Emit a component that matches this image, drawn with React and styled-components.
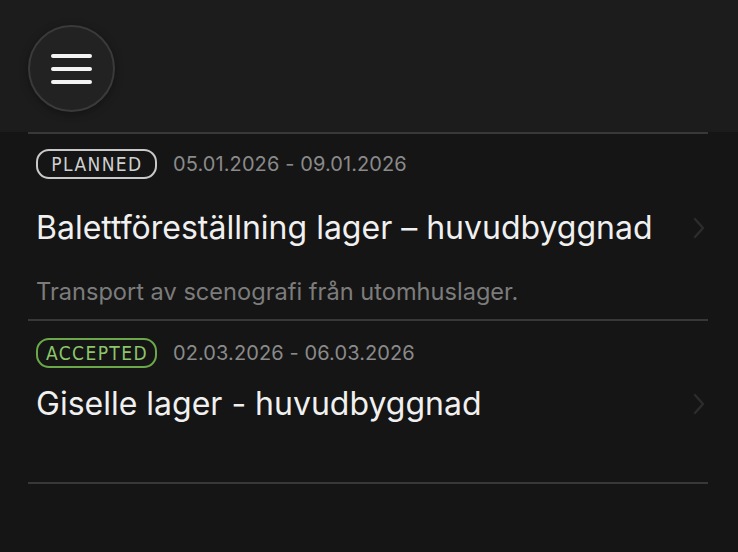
import React from "react";
import styled, { createGlobalStyle, css } from "styled-components";

const GlobalStyle = createGlobalStyle`
  html, body {
    margin: 0;
    padding: 0;
    background: #151515;
  }
  body {
    font-family: Inter, "Noto Sans", sans-serif;
    -webkit-font-smoothing: antialiased;
  }
`;

const Page = styled.div`
  width: 738px;
  height: 552px;
  background: #151515;
  overflow: hidden;
`;

const Header = styled.header`
  height: 132px;
  background: #1c1c1c;
  display: flex;
  align-items: flex-start;
  padding: 25px 0 0 28px;
  box-sizing: border-box;
`;

const MenuButton = styled.button`
  width: 87px;
  height: 87px;
  border-radius: 50%;
  border: 2px solid #3a3a3a;
  background: #222222;
  display: flex;
  flex-direction: column;
  justify-content: center;
  align-items: center;
  gap: 9px;
  padding: 0;
  box-sizing: border-box;
  box-shadow: 0 2px 8px rgba(0, 0, 0, 0.35);
`;

const Bar = styled.span`
  display: block;
  width: 41px;
  height: 4px;
  border-radius: 2px;
  background: #f4f4f4;
`;

const List = styled.div`
  margin: 0 30px 0 28px;
  border-bottom: 2px solid #383838;
`;

const Item = styled.div`
  border-top: 2px solid #383838;
  padding: 15px 0 13px 8px;

  ${props =>
    props.compact &&
    css`
      padding: 17px 0 58px 8px;
    `};
`;

const Meta = styled.div`
  display: flex;
  align-items: center;
  gap: 16px;
`;

const Badge = styled.span`
  width: 121px;
  height: 30px;
  box-sizing: border-box;
  padding-left: 1px;
  border: 2px solid ${props => (props.green ? "#6aa84a" : "#c9c9c9")};
  color: ${props => (props.green ? "#8cc66a" : "#d0d0d0")};
  border-radius: 13px;
  display: flex;
  align-items: center;
  justify-content: center;
  font-family: "DejaVu Sans", sans-serif;
  font-stretch: condensed;
  font-size: 19px;
  font-weight: 400;
  letter-spacing: 1.4px;
`;

const Dates = styled.span`
  color: #8a8a8a;
  font-size: 20px;
  letter-spacing: 0.1px;
`;

const TitleRow = styled.div`
  display: flex;
  align-items: center;
  justify-content: space-between;
  margin-top: ${props => (props.compact ? "16px" : "29px")};
`;

const Title = styled.div`
  color: #f0f0f0;
  font-size: 32px;
  line-height: 40px;
  font-weight: 400;
`;

const Chevron = styled.svg`
  width: 14px;
  height: 22px;
  margin-right: 2px;
  flex-shrink: 0;
`;

const Description = styled.div`
  color: #7c7c7c;
  font-size: 23.6px;
  line-height: 28px;
  margin-top: 30px;
`;

const ChevronIcon = () => (
  <Chevron viewBox="0 0 14 22">
    <path
      d="M3 2 L11 11 L3 20"
      fill="none"
      stroke="#2c2c2c"
      strokeWidth="2.4"
      strokeLinecap="round"
      strokeLinejoin="round"
    />
  </Chevron>
);

const App = () => {
  return (
    <Page>
      <GlobalStyle />
      <Header>
        <MenuButton>
          <Bar />
          <Bar />
          <Bar />
        </MenuButton>
      </Header>
      <List>
        <Item>
          <Meta>
            <Badge>PLANNED</Badge>
            <Dates>05.01.2026 - 09.01.2026</Dates>
          </Meta>
          <TitleRow>
            <Title>Balettföreställning lager – huvudbyggnad</Title>
            <ChevronIcon />
          </TitleRow>
          <Description>Transport av scenografi från utomhuslager.</Description>
        </Item>
        <Item compact>
          <Meta>
            <Badge green>ACCEPTED</Badge>
            <Dates>02.03.2026 - 06.03.2026</Dates>
          </Meta>
          <TitleRow compact>
            <Title>Giselle lager - huvudbyggnad</Title>
            <ChevronIcon />
          </TitleRow>
        </Item>
      </List>
    </Page>
  );
};

export default App;
